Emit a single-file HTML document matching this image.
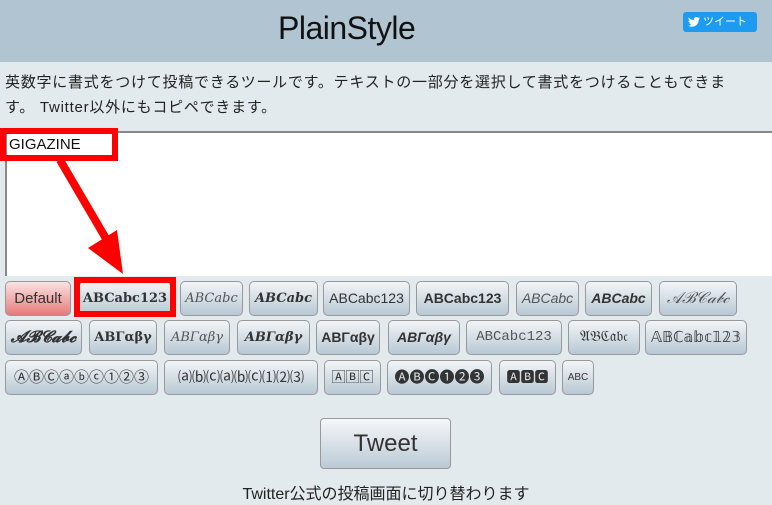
<!DOCTYPE html>
<html><head><meta charset="utf-8"><style>
*{margin:0;padding:0;box-sizing:border-box}
body{width:772px;height:505px;background:#e3eaee;font-family:"Liberation Sans","Noto Sans CJK JP",sans-serif;position:relative;overflow:hidden;color:#222}
.hdr{position:absolute;left:0;top:0;width:772px;height:62px;background:#b0c4d2}
.title{position:absolute;left:278px;top:10px;font-size:32px;color:#111;letter-spacing:-0.5px}
.tw{position:absolute;left:683px;top:12px;width:74px;height:20px;background:#1d9bf0;border-radius:3px;color:#fff;font-size:11px;line-height:20px;padding-left:20px}
.desc{position:absolute;left:5px;top:70px;width:744px;font-size:15px;line-height:25px;color:#222;letter-spacing:0.75px}
.ta{position:absolute;left:5px;top:131px;width:767px;height:145px;background:#fff;border-top:2px solid #888;border-left:2px solid #888}
.b{position:absolute;height:35px;border:1px solid #999;border-radius:5px;background:linear-gradient(#f2f5f7,#b8c8d4);font-size:14px;color:#333;text-align:center;line-height:33px;white-space:nowrap;overflow:hidden}
.red{position:absolute;border:6px solid #f00}
.tweet{position:absolute;left:320px;top:418px;width:131px;height:51px;border:1px solid #999;border-radius:4px;background:linear-gradient(#f5f7f9,#bccad6);font-size:24px;text-align:center;line-height:49px;color:#333}
.foot{position:absolute;left:0;width:772px;top:480px;text-align:center;font-size:16px;color:#222}
</style></head><body>
<div class="hdr"></div>
<div class="title">PlainStyle</div>
<div class="tw"><svg style="position:absolute;left:5px;top:5px" width="12" height="10" viewBox="0 0 24 20"><path fill="#fff" d="M24 2.4a10 10 0 0 1-2.8.8A5 5 0 0 0 23.3.4a10 10 0 0 1-3.1 1.2A4.9 4.9 0 0 0 11.8 6 14 14 0 0 1 1.700.9a4.9 4.9 0 0 0 1.5 6.6A4.9 4.9 0 0 1 1 6.9a4.9 4.9 0 0 0 3.9 4.9 5 5 0 0 1-2.2.1 4.9 4.9 0 0 0 4.6 3.4A9.9 9.9 0 0 1 0 17.3 14 14 0 0 0 7.5 19.5c9.1 0 14-7.5 14-14v-.6A10 10 0 0 0 24 2.4z"/></svg>ツイート</div>
<div class="desc">英数字に書式をつけて投稿できるツールです。テキストの一部分を選択して書式をつけることもできます。 Twitter以外にもコピペできます。</div>
<div class="ta"></div>
<div style="position:absolute;left:7px;top:134px;width:104px;height:22px;background:#fff;font-size:15px;line-height:22px;padding-left:2px;color:#111">GIGAZINE</div>
<div class="red" style="left:0;top:128px;width:118px;height:33px"></div>
<svg style="position:absolute;left:0;top:0" width="772" height="505"><line x1="60" y1="160" x2="108" y2="242" stroke="#f00" stroke-width="8"/><polygon points="88,248 117,230 123,274" fill="#f00"/></svg>

<div class="b" style="left:5px;top:281px;width:66px;background:linear-gradient(#fbe3e3,#e77a7a);font-size:15px">Default</div>
<div class="b" style="left:79px;top:281px;width:92px;font-family:'DejaVu Serif',serif;font-weight:bold;font-size:13px">ABCabc123</div>
<div class="red" style="left:74px;top:277px;width:102px;height:40px"></div>
<div class="b" style="left:180px;top:281px;width:63px;font-family:'DejaVu Serif',serif;font-style:italic;font-size:13px;color:#555">ABCabc</div>
<div class="b" style="left:249px;top:281px;width:69px;font-family:'DejaVu Serif',serif;font-style:italic;font-weight:bold;font-size:13px">ABCabc</div>
<div class="b" style="left:323px;top:281px;width:87px">ABCabc123</div>
<div class="b" style="left:416px;top:281px;width:93px;font-weight:bold">ABCabc123</div>
<div class="b" style="left:516px;top:281px;width:63px;font-style:italic;color:#555">ABCabc</div>
<div class="b" style="left:585px;top:281px;width:67px;font-style:italic;font-weight:bold">ABCabc</div>
<div class="b" style="left:659px;top:281px;width:78px;font-family:'Liberation Serif',serif;font-style:italic;color:#555;font-size:16px">𝒜ℬ𝒞𝒶𝒷𝒸</div>

<div class="b" style="left:5px;top:320px;width:77px;font-family:'Liberation Serif',serif;font-style:italic;font-weight:bold;font-size:16px">𝓐𝓑𝓒𝓪𝓫𝓬</div>
<div class="b" style="left:89px;top:320px;width:68px;font-family:'DejaVu Serif',serif;font-weight:bold;font-size:13px">ΑΒΓαβγ</div>
<div class="b" style="left:164px;top:320px;width:66px;font-family:'DejaVu Serif',serif;font-style:italic;font-size:13px;color:#555">ΑΒΓαβγ</div>
<div class="b" style="left:237px;top:320px;width:73px;font-family:'DejaVu Serif',serif;font-style:italic;font-weight:bold;font-size:13px">ΑΒΓαβγ</div>
<div class="b" style="left:316px;top:320px;width:64px;font-weight:bold">ΑΒΓαβγ</div>
<div class="b" style="left:388px;top:320px;width:72px;font-style:italic;font-weight:bold">ΑΒΓαβγ</div>
<div class="b" style="left:466px;top:320px;width:96px;font-family:'Liberation Mono',monospace;font-size:14px;color:#555">ABCabc123</div>
<div class="b" style="left:568px;top:320px;width:72px;font-family:'Liberation Serif',serif;font-size:15px">𝔄𝔅ℭ𝔞𝔟𝔠</div>
<div class="b" style="left:645px;top:320px;width:102px;font-family:'DejaVu Sans',sans-serif;font-size:15px">𝔸𝔹ℂ𝕒𝕓𝕔𝟙𝟚𝟛</div>

<div class="b" style="left:5px;top:360px;width:153px;font-size:15px">ⒶⒷⒸⓐⓑⓒ①②③</div>
<div class="b" style="left:164px;top:360px;width:154px;font-size:14px">⒜⒝⒞⒜⒝⒞⑴⑵⑶</div>
<div class="b" style="left:324px;top:360px;width:57px;font-size:14px">🄰🄱🄲</div>
<div class="b" style="left:387px;top:360px;width:105px;font-size:15px">🅐🅑🅒➊➋➌</div>
<div class="b" style="left:499px;top:360px;width:57px;font-size:14px">🅰🅱🅲</div>
<div class="b" style="left:562px;top:360px;width:32px;font-size:10px">ABC</div>

<div class="tweet">Tweet</div>
<div class="foot">Twitter公式の投稿画面に切り替わります</div>
</body></html>
